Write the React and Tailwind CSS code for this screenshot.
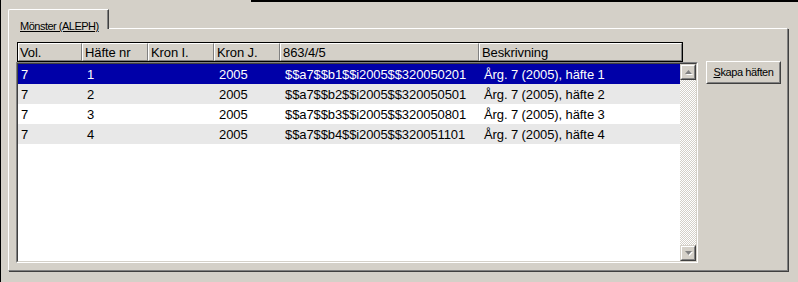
import React from 'react';

const headers = [
  { label: 'Vol.', w: 'w-[64px]', pad: 'pl-[1px]' },
  { label: 'Häfte nr', w: 'w-[66px]', pad: 'pl-[2px]' },
  { label: 'Kron I.', w: 'w-[66px]', pad: 'pl-[2px]' },
  { label: 'Kron J.', w: 'w-[66px]', pad: 'pl-[2px]' },
  { label: '863/4/5', w: 'w-[199px]', pad: 'pl-[2px]' },
  { label: 'Beskrivning', w: 'w-[203px]', pad: 'pl-[2px]' },
];

const rowCols = ['w-[64px] pl-[3px]', 'w-[66px] pl-[5px]', 'w-[66px] pl-[5px]', 'w-[66px] pl-[5px]', 'w-[199px] pl-[5px]', 'flex-1 pl-[5px]'];

const rows = [
  ['7', '1', '', '2005', '$$a7$$b1$$i2005$$320050201', 'Årg. 7 (2005), häfte 1'],
  ['7', '2', '', '2005', '$$a7$$b2$$i2005$$320050501', 'Årg. 7 (2005), häfte 2'],
  ['7', '3', '', '2005', '$$a7$$b3$$i2005$$320050801', 'Årg. 7 (2005), häfte 3'],
  ['7', '4', '', '2005', '$$a7$$b4$$i2005$$320051101', 'Årg. 7 (2005), häfte 4'],
];

const rowBg = ['bg-[#0000a8] text-white', 'bg-[#e8e8e8] text-black', 'bg-white text-black', 'bg-[#e8e8e8] text-black'];

// classic raised 3d button, 16x16, disabled arrow inside
const ScrollButton = ({ down }) => (
  <div className="w-[16px] h-[16px] border border-t-[#d4d0c8] border-l-[#d4d0c8] border-r-[#404040] border-b-[#404040]">
    <div className="w-full h-full bg-[#d4d0c8] border border-t-white border-l-white border-r-[#808080] border-b-[#808080] flex items-center justify-center">
      <svg width="9" height="6" viewBox="0 0 9 6">
        {down ? (
          <>
            <path d="M2 2h7l-3.5 4z" fill="#ffffff" />
            <path d="M1 1h7L4.5 5z" fill="#808080" />
          </>
        ) : (
          <>
            <path d="M2 6h7L5.5 2z" fill="#ffffff" />
            <path d="M1 5h7L4.5 1z" fill="#808080" />
          </>
        )}
      </svg>
    </div>
  </div>
);

export default function App() {
  return (
    <div className="w-[798px] h-[282px] bg-[#d4d0c8] overflow-hidden border-l border-l-black font-['Liberation_Sans',Arial,sans-serif] text-black">
      <div className="flex h-[2px]">
        <div className="w-[250px]" />
        <div className="flex-1 bg-black" />
      </div>

      {/* tab */}
      <div className="pt-[7px] pl-[7px]">
        <div className="relative z-10 -mb-[1px] w-[101px] h-[20px] bg-[#d4d0c8] border-t border-l border-r border-t-white border-l-white border-r-[#404040] rounded-tl-[2px] shadow-[inset_-1px_0_0_#808080] pl-[11px] pt-[3px]">
          <span className="text-[11px] tracking-[-0.5px] underline underline-offset-[1px] leading-[14px]">Mönster (ALEPH)</span>
        </div>

        {/* tab panel */}
        <div className="w-[780px] h-[243px] border-t border-l border-r border-b border-t-white border-l-white border-r-[#808080] border-b-[#808080] shadow-[1px_1px_0_#404040] pl-[7px] pt-[13px] flex">
          <div className="w-[682px] flex flex-col text-[13px] tracking-[-0.1px]">
            {/* header */}
            <div className="ml-[1px] w-[666px] h-[20px] border border-black flex">
              {headers.map(h => (
                <div key={h.label} className={`${h.w} h-full border-t border-l border-r border-b border-t-white border-l-white border-r-[#808080] border-b-[#808080] bg-[#d4d0c8] ${h.pad} flex items-center leading-none whitespace-nowrap overflow-hidden`}>
                  {h.label}
                </div>
              ))}
            </div>

            {/* list */}
            <div className="h-[201px] border border-t-[#808080] border-l-[#808080] border-r-white border-b-white">
              <div className="h-full border border-t-[#404040] border-l-[#404040] border-r-[#d4d0c8] border-b-[#d4d0c8] flex">
                <div className="w-[662px] h-full bg-white">
                  {rows.map((r, i) => (
                    <div key={i} className={`h-[20px] flex items-center whitespace-nowrap ${rowBg[i]}`}>
                      {r.map((c, j) => (
                        <div key={j} className={`${rowCols[j]} leading-none`}>{c}</div>
                      ))}
                    </div>
                  ))}
                </div>
                <div className="w-[16px] h-full flex flex-col">
                  <ScrollButton />
                  <div className="flex-1 bg-[repeating-conic-gradient(#d4d0c8_0_25%,#ffffff_0_50%)] bg-[length:2px_2px]" />
                  <ScrollButton down />
                </div>
              </div>
            </div>
          </div>

          {/* button */}
          <div className="ml-[8px] mt-[19px] w-[75px] h-[23px] border border-t-white border-l-white border-r-[#404040] border-b-[#404040]">
            <div className="w-full h-full border border-t-[#d4d0c8] border-l-[#d4d0c8] border-r-[#808080] border-b-[#808080] flex items-center justify-center text-[11px] tracking-[-0.4px] leading-none pb-[1px]">
              <span><span className="underline underline-offset-[1px]">S</span>kapa häften</span>
            </div>
          </div>
        </div>
      </div>
    </div>
  );
}
